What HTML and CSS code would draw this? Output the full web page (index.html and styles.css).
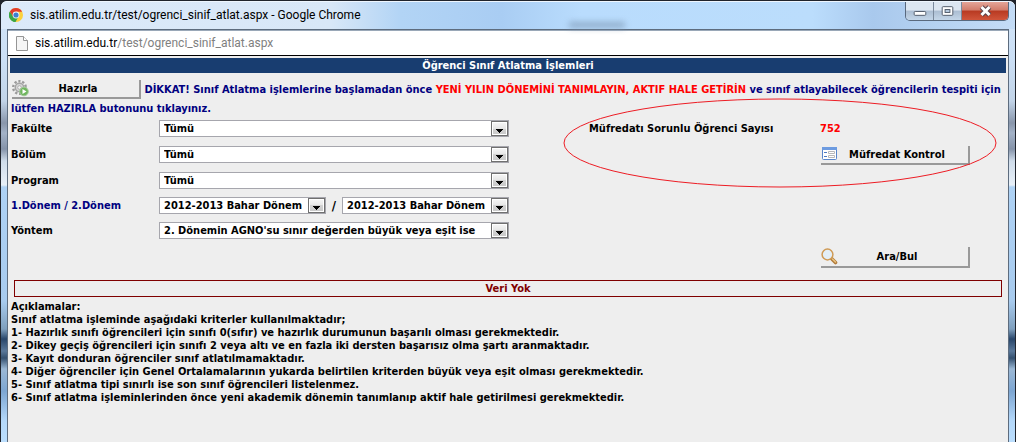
FILE: index.html
```html
<!DOCTYPE html>
<html lang="tr">
<head>
<meta charset="utf-8">
<title>sis.atilim.edu.tr/test/ogrenci_sinif_atlat.aspx</title>
<link rel="stylesheet" href="styles.css">
</head>
<body>
<svg class="symbols" aria-hidden="true">
  <defs>
    <linearGradient id="face" x1="0" y1="0" x2="0" y2="1"><stop offset="0" stop-color="#f4f4f4"/><stop offset=".5" stop-color="#e6e6e6"/><stop offset=".5" stop-color="#d2d2d2"/><stop offset="1" stop-color="#cacaca"/></linearGradient>
    <symbol id="drop" viewBox="0 0 17 15">
      <rect width="17" height="15" fill="#707070"/><rect x="1" y="1" width="15" height="13" fill="#fff"/><rect x="2" y="2" width="13" height="11" fill="url(#face)"/>
      <path d="M5 8h7v1h-1v1h-1v1H9v1H8v-1H7v-1H6V9H5z" fill="#000"/>
    </symbol>
  </defs>
</svg>
<div class="window">
  <header class="titlebar">
    <svg class="chrome" viewBox="0 0 16 16" aria-hidden="true">
      <circle cx="8" cy="8" r="7" fill="#fbd03b"/>
      <path d="M8 8 1.9 4.5A7 7 0 0 1 14.1 4.7H8z" fill="#e23c2c"/>
      <path d="M1.9 4.5A7 7 0 0 0 7.5 15L10.6 9.5 5.2 9.5z" fill="#3aa648"/>
      <path d="M1.9 4.5 5 9.6 8 8V4.7z" fill="#d83a2b"/>
      <path d="M1.7 5 5 10.5 8 11.2 7 15A7 7 0 0 1 1.7 5z" fill="#3aa648"/>
      <circle cx="8" cy="8" r="3.4" fill="#f4f8fc"/><circle cx="8" cy="8" r="2.6" fill="#3c7fd0"/>
    </svg>
    <span class="title">sis.atilim.edu.tr/test/ogrenci_sinif_atlat.aspx - Google Chrome</span>
    <span class="ghost" aria-hidden="true"></span>
    <div class="controls">
      <button class="ctl" type="button" aria-label="Simge durumuna küçült"><svg viewBox="0 0 28 18"><rect x="8.500" y="9.500" width="12" height="4" rx="1" fill="#fff" stroke="#505968"/></svg></button>
      <button class="ctl" type="button" aria-label="Ekranı kapla"><svg viewBox="0 0 28 18"><rect x="8.500" y="4.500" width="11" height="9" rx="1" fill="#fff" stroke="#505968"/><rect x="11.500" y="7.500" width="5" height="3" fill="#b8cce0" stroke="#505968"/></svg></button>
      <button class="ctl close" type="button" aria-label="Kapat"><svg viewBox="0 0 46 18"><path d="m19.500 5 8 8m0-8-8 8" stroke="#59434a" stroke-width="5"/><path d="m19.500 5 8 8m0-8-8 8" stroke="#fff" stroke-width="3"/></svg></button>
    </div>
  </header>
  <div class="frame">
    <div class="address">
      <svg class="doc" viewBox="0 0 12 16" aria-hidden="true"><path d="M.5 1.500h7l4 4v10H.5z" fill="#f5f5f5" stroke="#959595"/><path d="M7.500 1.500v4h4" fill="#fff" stroke="#959595"/></svg>
      <span>sis.atilim.edu.tr<span class="path">/test/ogrenci_sinif_atlat.aspx</span></span>
    </div>
    <main class="page">
      <h1 class="heading">Öğrenci Sınıf Atlatma İşlemleri</h1>
      <p class="intro">
        <button class="button prepare" type="button">
          <svg class="icon" viewBox="0 0 17 17" aria-hidden="true"><circle cx="7.500" cy="7.500" r="6.300" fill="none" stroke="#9a9a9a" stroke-width="2.400" stroke-dasharray="2.200 1.760"/><circle cx="7.500" cy="7.500" r="4.200" fill="#d8d8d8" stroke="#a5a5a5" stroke-width="1.500"/><circle cx="7.500" cy="7.500" r="1.800" fill="#f2f2f2" stroke="#999" stroke-width=".7"/><circle cx="12" cy="11.500" r="4.300" fill="#70b65e" stroke="#a0c997"/><path d="m10.500 9 4 2.500-4 2.500z" fill="#fff"/></svg>
          <span class="label">Hazırla</span>
        </button>
        DİKKAT! Sınıf Atlatma işlemlerine başlamadan önce <em class="alert">YENİ YILIN DÖNEMİNİ TANIMLAYIN, AKTIF HALE GETİRİN</em> ve sınıf atlayabilecek öğrencilerin tespiti için<br>lütfen HAZIRLA butonunu tıklayınız.
      </p>
      <form class="form">
        <label for="fakulte">Fakülte</label>
        <span class="select"><select id="fakulte"><option>Tümü</option></select><svg class="arrow" aria-hidden="true"><use href="#drop"/></svg></span>
        <span>Müfredatı Sorunlu Öğrenci Sayısı</span>
        <output class="count">752</output>

        <label for="bolum">Bölüm</label>
        <span class="select"><select id="bolum"><option>Tümü</option></select><svg class="arrow" aria-hidden="true"><use href="#drop"/></svg></span>
        <button class="button side" type="button">
          <svg class="icon" viewBox="0 0 17 17" aria-hidden="true"><rect x="1.500" y="1.500" width="14" height="12" rx="1" fill="#fff" stroke="#5985c9"/><path d="M1 1h15v3H1z" fill="#6d9be0"/><path d="M3 6.500h3M3 10.500h3" stroke="#4d79c0"/><path d="M7.500 5.500h6v2h-6zm0 4h6v2h-6z" fill="#fff" stroke="#b8b8b8"/></svg>
          <span class="label">Müfredat Kontrol</span>
        </button>

        <label for="program">Program</label>
        <span class="select"><select id="program"><option>Tümü</option></select><svg class="arrow" aria-hidden="true"><use href="#drop"/></svg></span>

        <label class="term" for="donem1">1.Dönem / 2.Dönem</label>
        <span class="pair">
          <span class="select"><select id="donem1"><option>2012-2013 Bahar Dönem</option></select><svg class="arrow" aria-hidden="true"><use href="#drop"/></svg></span>
          <span class="slash">/</span>
          <span class="select"><select id="donem2" aria-label="2.Dönem"><option>2012-2013 Bahar Dönem</option></select><svg class="arrow" aria-hidden="true"><use href="#drop"/></svg></span>
        </span>

        <label for="yontem">Yöntem</label>
        <span class="select"><select id="yontem"><option>2. Dönemin AGNO'su sınır değerden büyük veya eşit ise</option></select><svg class="arrow" aria-hidden="true"><use href="#drop"/></svg></span>

        <button class="button side search" type="button">
          <svg class="icon" viewBox="0 0 17 17" aria-hidden="true"><path d="m10.500 10.500 4 4" stroke="#b07a3a" stroke-width="3.600" stroke-linecap="round"/><path d="m11.500 11 3 3" stroke="#eac27e" stroke-width="1.600" stroke-linecap="round"/><circle cx="6.500" cy="6.500" r="5.400" fill="#e3eef6" stroke="#cf9a55" stroke-width="1.500"/></svg>
          <span class="label">Ara/Bul</span>
        </button>
        <svg class="ring" viewBox="0 0 434 90" preserveAspectRatio="none" aria-hidden="true"><ellipse cx="217" cy="45" rx="216" ry="44" fill="none" stroke="#ed1c24"/></svg>
      </form>
      <p class="empty">Veri Yok</p>
      <section class="notes">
        <div>Açıklamalar:</div>
        <div>Sınıf atlatma işleminde aşağıdaki kriterler kullanılmaktadır;</div>
        <div>1- Hazırlık sınıfı öğrencileri için sınıfı 0(sıfır) ve hazırlık durumunun başarılı olması gerekmektedir.</div>
        <div>2- Dikey geçiş öğrencileri için sınıfı 2 veya altı ve en fazla iki dersten başarısız olma şartı aranmaktadır.</div>
        <div>3- Kayıt donduran öğrenciler sınıf atlatılmamaktadır.</div>
        <div>4- Diğer öğrenciler için Genel Ortalamalarının yukarda belirtilen kriterden büyük veya eşit olması gerekmektedir.</div>
        <div>5- Sınıf atlatma tipi sınırlı ise son sınıf öğrencileri listelenmez.</div>
        <div>6- Sınıf atlatma işleminlerinden önce yeni akademik dönemin tanımlanıp aktif hale getirilmesi gerekmektedir.</div>
      </section>
    </main>
  </div>
</div>
</body>
</html>
```
FILE: styles.css
```css
* { box-sizing: border-box; }
body { margin: 0; background: #20242c; font: bold 11px/13px "DejaVu Sans Condensed", "DejaVu Sans", sans-serif; color: #000; }
.symbols { position: absolute; width: 0; height: 0; }

.window {
  display: flex; flex-direction: column; min-height: 100vh;
  border: solid #20242c; border-width: 1px 1px 0; border-radius: 7px 7px 0 0;
  background: linear-gradient(#d3e5f8 0, #cbdff5 60px, #c2d4e8 100px, #8996ab 122px, #a3b2c7 132px, #8593a9 148px, #cfdcea 160px, #e8f0f8 184px, #aed2f5 186px, #a8cbee 300px, #7f9fbd 328px, #29466a 338px, #5a789a 350px, #34506f 357px, #9bb8d5 368px, #7da6d2 390px, #b4d8fa 420px, #bbdefd 442px);
}
.titlebar {
  display: flex; align-items: flex-start; height: 28px; padding-left: 7px;
  border-top: 1px solid #eef6fe; border-radius: 6px 6px 0 0;
  background: linear-gradient(90deg, #dceafa 0, #d8e7f7 330px, #b2d4f5 400px, #a9cdf3 500px, #b9dcfd 580px, #bbddfc 80%, #a9c9ed 86%, #c4dcf6 100%);
}
.chrome { width: 16px; height: 16px; margin-top: 5px; }
.title { margin-left: 6px; font: 12px/16px Roboto, "Noto Sans", sans-serif; padding-top: 5px; white-space: nowrap; }
.ghost { width: 56px; height: 6px; margin: 20px 280px 0 auto; background: #7d98b4; filter: blur(3px); opacity: .7; }
.controls { display: flex; margin-right: 6px; border: 1px solid #59697e; border-top: 0; border-radius: 0 0 5px 5px; overflow: hidden; }
.ctl { width: 28px; height: 18px; padding: 0; border: 0; border-right: 1px solid #7b8a9d; background: linear-gradient(#dce6f1 0 45%, #abbdd2 50%, #c4d6e8); }
.ctl svg { display: block; width: 100%; height: 18px; }
.close { width: 46px; border-right: 0; background: linear-gradient(#e4a598 0, #d27c6b 45%, #b83a22 50%, #d0553b); }

.frame { flex: 1; display: flex; flex-direction: column; margin: 0 6px; border: 1px solid #5d6c7e; border-bottom: 0; background: #eee; }
.address {
  display: flex; align-items: center; gap: 7px; height: 26px; padding-left: 8px;
  border-top: 1px solid #9aa8b8; border-bottom: 1px solid #000; background: #fff;
  font: 12px/16px Roboto, "Noto Sans", sans-serif;
}
.doc { width: 12px; height: 16px; }
.path { color: #808080; }

.page { padding: 2px 2px 0; }
.heading { margin: 0; background: #183d70; color: #fff; font-size: 11px; line-height: 15px; text-align: center; }
.intro { margin: 7px 0 2px 1px; color: #000080; line-height: 19px; white-space: nowrap; }
.alert { color: #f00; font-style: normal; }

.button {
  display: inline-flex; align-items: center; height: 19px; margin-left: 1px; padding: 0 12px 0 0;
  border: solid #999; border-width: 0 2px 2px 0; background: #eee; color: #000; font: inherit;
}
.prepare { width: 129px; vertical-align: top; }
.icon { flex: none; width: 17px; height: 17px; }
.label { flex: 1; text-align: center; white-space: nowrap; }

.form {
  position: relative; display: grid; margin-left: 1px; align-items: start;
  grid-template: 26px 26px 25px 25px 25px 33px / 148fr 430fr 231fr 186fr;
  line-height: 18px;
}
.form label { grid-column: 1; }
.select { position: relative; display: block; width: 350px; max-width: 100%; }
.select select {
  appearance: none; display: block; width: 100%; height: 17px; padding: 0 18px 0 4px;
  border: 1px solid #a6a6ad; border-radius: 0; background: #fff; color: #000; font: inherit; line-height: 15px;
}
.arrow { position: absolute; top: 1px; right: 1px; width: 17px; height: 15px; pointer-events: none; }
.pair { display: flex; width: 350px; }
.pair .select { width: 167px; }
.slash { flex: 1; text-align: center; font-size: 13px; }
.term { color: #000080; }
.count { color: #f00; }
.side { grid-column: 4; width: 149px; }
.search { grid-row: 6; height: 21px; }
.ring { position: absolute; left: 552px; top: -22px; width: 434px; height: 90px; pointer-events: none; }

.empty { margin: 0 4px 3px; border: 1px solid #800000; color: #800000; line-height: 15px; text-align: center; }
.notes { margin-left: 1px; }
```
